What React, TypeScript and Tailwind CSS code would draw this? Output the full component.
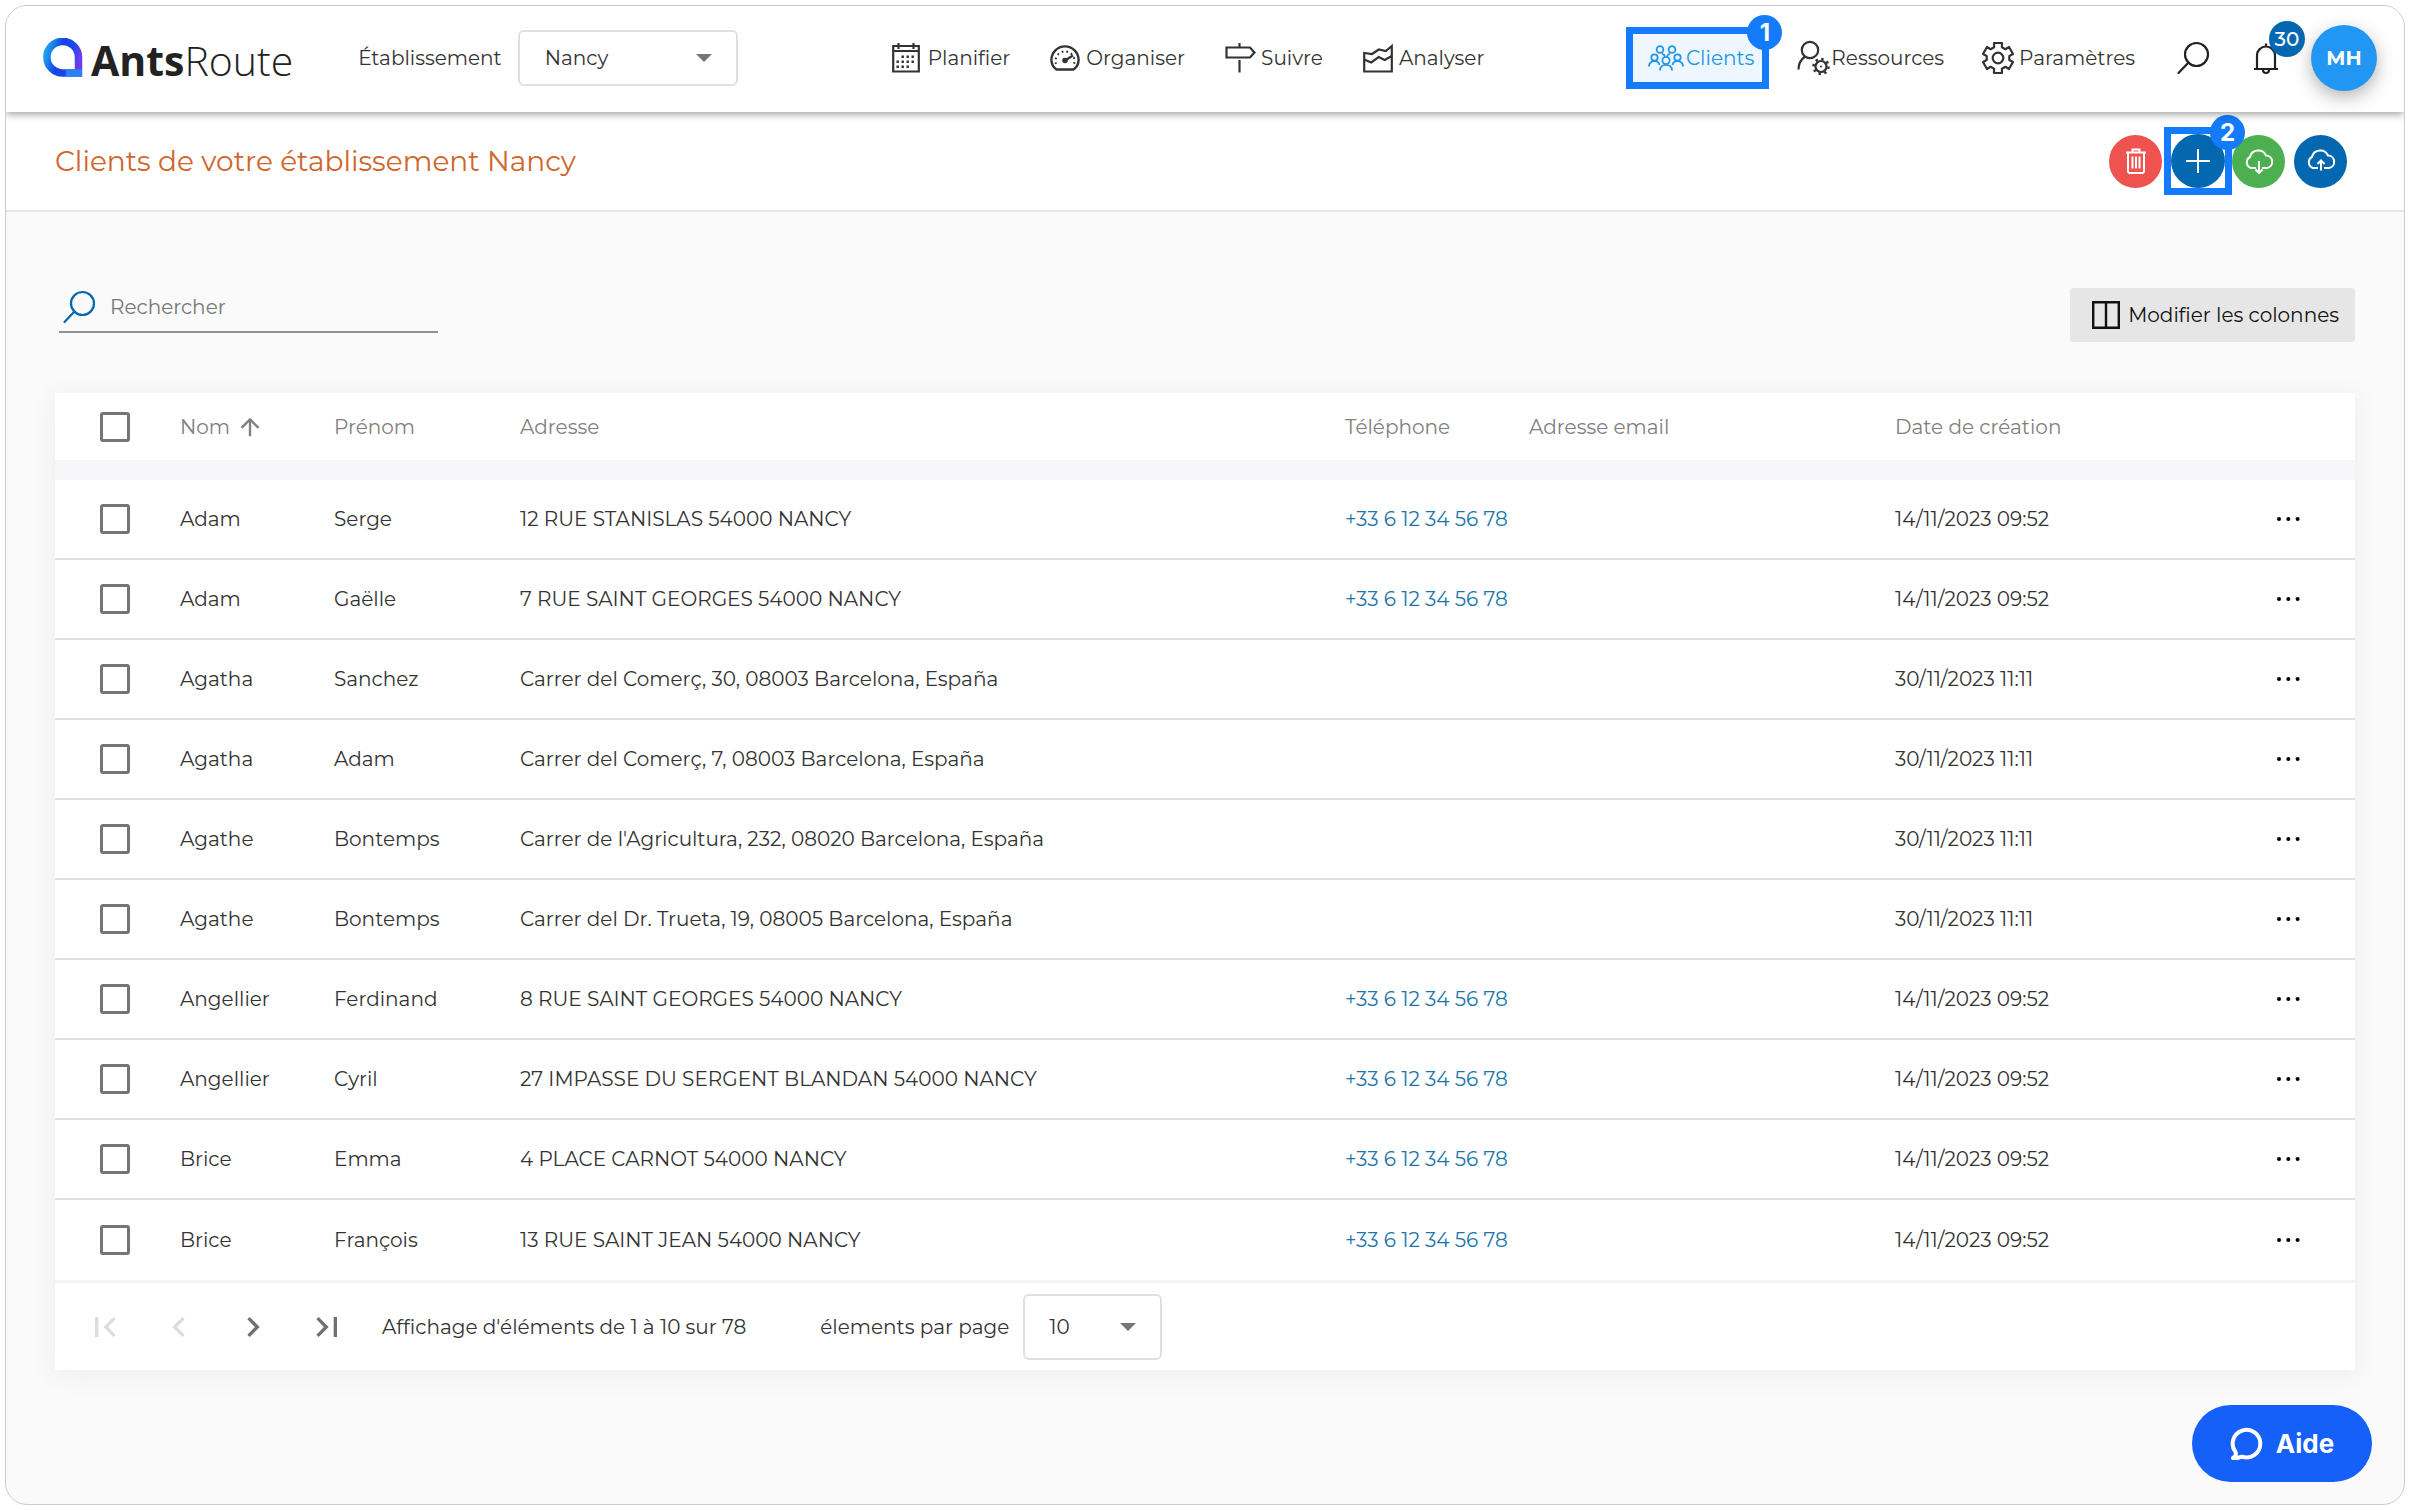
import React from 'react';
import {
  MdArrowUpward,
  MdChevronLeft,
  MdChevronRight,
  MdFirstPage,
  MdLastPage,
} from 'react-icons/md';

type Client = {
  nom: string;
  prenom: string;
  adresse: string;
  telephone?: string;
  creation: string;
};

const PHONE = '+33 6 12 34 56 78';

const clients: Client[] = [
  { nom: 'Adam', prenom: 'Serge', adresse: '12 RUE STANISLAS 54000 NANCY', telephone: PHONE, creation: '14/11/2023 09:52' },
  { nom: 'Adam', prenom: 'Gaëlle', adresse: '7 RUE SAINT GEORGES 54000 NANCY', telephone: PHONE, creation: '14/11/2023 09:52' },
  { nom: 'Agatha', prenom: 'Sanchez', adresse: 'Carrer del Comerç, 30, 08003 Barcelona, España', creation: '30/11/2023 11:11' },
  { nom: 'Agatha', prenom: 'Adam', adresse: 'Carrer del Comerç, 7, 08003 Barcelona, España', creation: '30/11/2023 11:11' },
  { nom: 'Agathe', prenom: 'Bontemps', adresse: "Carrer de l'Agricultura, 232, 08020 Barcelona, España", creation: '30/11/2023 11:11' },
  { nom: 'Agathe', prenom: 'Bontemps', adresse: 'Carrer del Dr. Trueta, 19, 08005 Barcelona, España', creation: '30/11/2023 11:11' },
  { nom: 'Angellier', prenom: 'Ferdinand', adresse: '8 RUE SAINT GEORGES 54000 NANCY', telephone: PHONE, creation: '14/11/2023 09:52' },
  { nom: 'Angellier', prenom: 'Cyril', adresse: '27 IMPASSE DU SERGENT BLANDAN 54000 NANCY', telephone: PHONE, creation: '14/11/2023 09:52' },
  { nom: 'Brice', prenom: 'Emma', adresse: '4 PLACE CARNOT 54000 NANCY', telephone: PHONE, creation: '14/11/2023 09:52' },
  { nom: 'Brice', prenom: 'François', adresse: '13 RUE SAINT JEAN 54000 NANCY', telephone: PHONE, creation: '14/11/2023 09:52' },
];

const CalendarIcon = () => (
  <svg className="w-8 h-[30px]" viewBox="0 0 32 30" fill="none" stroke="currentColor" strokeWidth="2.2">
    <path d="M1.2 3h25.600v25.500H1.200zM1 8h26" />
    <path d="M6.500 0v6M21.500 0v6" />
    <path d="M9.500 13.700h13M4.500 18.700h18M4.500 23.700h13" strokeWidth="2.4" strokeDasharray="2.4 2.6" />
  </svg>
);

const GaugeIcon = () => (
  <svg className="w-8 h-[26px]" viewBox="0 0 32 26" fill="none" stroke="currentColor" strokeWidth="2.4">
    <path d="M6.500 24.500C3 22 1.400 18.500 1.400 15a13.600 13.600 0 0 1 27.200 0c0 3.500-1.600 7-5.100 9.500z" strokeLinejoin="round" />
    <path d="M6 19a9.500 9.500 0 1 1 18 0" strokeWidth="2" strokeDasharray="1.8 3" />
    <path d="m15 15.500 8-5" />
    <circle cx="15" cy="15.500" r="1.600" fill="currentColor" />
  </svg>
);

const SignIcon = () => (
  <svg className="w-8 h-[30px]" viewBox="0 0 32 30" fill="none" stroke="currentColor" strokeWidth="2.2">
    <path d="M1.500 4.500h23.500l4.500 5-4.500 5H1.500zM14.500 0v4M14.500 17v12.500" />
  </svg>
);

const ChartIcon = () => (
  <svg className="w-8 h-[30px]" viewBox="0 0 32 30" fill="none" stroke="currentColor" strokeWidth="2.2">
    <path d="M1.200 10v18.500h27.600V3l-6 5-7-1.500L9 11z" />
    <path d="m1.200 16.500 7 3 7.500-5.500 6 3 7-4" />
  </svg>
);

const PeopleIcon = () => (
  <svg className="w-9 h-[26px]" viewBox="0 0 36 26" fill="none" stroke="currentColor" strokeWidth="1.8">
    <circle cx="12" cy="4.500" r="3.400" />
    <circle cx="24" cy="4.500" r="3.400" />
    <circle cx="6.500" cy="12.500" r="3.200" />
    <circle cx="29.500" cy="12.500" r="3.200" />
    <circle cx="18" cy="15.500" r="3.600" />
    <path d="M1 21.500c0-6.500 9.500-7.500 10.500-1.500M24.500 20c1-6 10.500-5 10.500 1.500M12 25.500c0-7.500 12-7.500 12 0" />
    <path d="M14 8.500c1.500.5 2.500 1.500 3 3M22 8.500c-1.500.5-2.500 1.500-3 3" />
  </svg>
);

const UserGearIcon = () => (
  <svg className="w-[34px] h-9" viewBox="0 0 34 36" fill="none" stroke="currentColor" strokeWidth="2.2">
    <circle cx="13" cy="10" r="8.200" />
    <path d="M1.500 29.500c0-6.500 2.500-10 6.500-13" />
    <circle cx="24" cy="26.500" r="5.500" />
    <circle cx="24" cy="26.500" r="7.500" strokeWidth="2.5" strokeDasharray="2.4 3.49" />
    <circle cx="24" cy="26.500" r="0.800" fill="currentColor" strokeWidth="0.5" />
  </svg>
);

// six flat teeth, one pointing straight up
const gearPoints = Array.from({ length: 6 }, (_, i) => {
  const corners = [[-20, 11.5], [-15, 15.5], [15, 15.5], [20, 11.5]];
  return corners.map(([deg, r]) => {
    const a = ((i * 60 - 90 + deg) * Math.PI) / 180;
    return `${(17 + r * Math.cos(a)).toFixed(1)},${(17 + r * Math.sin(a)).toFixed(1)}`;
  }).join(' ');
}).join(' ');

const GearIcon = () => (
  <svg className="size-[34px]" viewBox="0 0 34 34" fill="none" stroke="currentColor" strokeWidth="2.2" strokeLinejoin="round">
    <polygon points={gearPoints} />
    <circle cx="17" cy="17" r="5.300" />
  </svg>
);

const SearchIcon = () => (
  <svg className="size-[34px] shrink-0" viewBox="0 0 34 34" fill="none" stroke="currentColor" strokeWidth="2.2" strokeLinecap="round">
    <circle cx="20.500" cy="13.500" r="11.500" />
    <path d="M12.500 21.500 2.500 32" />
  </svg>
);

const BellIcon = () => (
  <svg className="w-[26px] h-[34px]" viewBox="0 0 26 34" fill="none" stroke="currentColor" strokeWidth="2.2">
    <path d="M1 28h24M4 28V14.500a9 9 0 0 1 18 0V28M13 2.500v3" />
    <path d="M10 29a3 3 0 0 0 6 0" />
  </svg>
);

const TrashIcon = () => (
  <svg className="w-[22px] h-[26px]" viewBox="0 0 22 26" fill="none" stroke="currentColor" strokeWidth="2">
    <path d="M1 4.500h20M7.500 4V1.500h7V4M3 5v18a2 2 0 0 0 2 2h12a2 2 0 0 0 2-2V5M7.500 8.500v12M11 8.500v12M14.500 8.500v12" />
  </svg>
);

const PlusIcon = () => (
  <svg className="size-6" viewBox="0 0 24 24" stroke="currentColor" strokeWidth="2">
    <path d="M12 0v24M0 12h24" />
  </svg>
);

const CloudIcon = ({ up }: { up?: boolean }) => (
  <svg className="w-[30px] h-[26px]" viewBox="0 0 30 26" fill="none" stroke="currentColor" strokeWidth="2">
    <path d="M12 20H7A6 6 0 0 1 6 9a8.500 8.500 0 0 1 16-1.500A6.300 6.300 0 0 1 23 20h-5" />
    {up ? <path d="M15 22.500V13M11.500 16 15 12.500l3.500 3.500" /> : <path d="M15 13v12M11.500 21.500 15 25l3.500-3.500" />}
  </svg>
);

const Logo = () => (
  <a href="#accueil" aria-label="AntsRoute" className="flex items-center gap-2 text-[#222]">
    <svg className="size-10" viewBox="0 0 40 40" fill="none">
      <defs>
        <linearGradient id="logo" x1="0" y1="0.300" x2="1" y2="0.600">
          <stop offset="0" stopColor="#1d9bf0" />
          <stop offset="0.400" stopColor="#1244e0" />
          <stop offset="0.750" stopColor="#1c48e8" />
          <stop offset="1" stopColor="#6a3df0" />
        </linearGradient>
      </defs>
      <path d="M35.500 35V19A15.800 15.800 0 1 0 20 35z" stroke="url(#logo)" strokeWidth="7.5" />
      <path d="M23 35h16" stroke="#2b80f5" strokeWidth="7.5" />
    </svg>
    <span className="text-[41px] leading-[40px] font-['Open_Sans'] pt-1">
      <b>Ants</b>
      <span className="font-light">Route</span>
    </span>
  </a>
);

const navLeft = [
  { label: 'Planifier', icon: <CalendarIcon /> },
  { label: 'Organiser', icon: <GaugeIcon /> },
  { label: 'Suivre', icon: <SignIcon /> },
  { label: 'Analyser', icon: <ChartIcon /> },
];

const StepBadge = ({ children }: { children: React.ReactNode }) => (
  <span className="absolute -top-[19px] -right-5 size-[35px] rounded-full bg-[#147cfc] flex items-center justify-center font-['Inter'] text-[24px] font-bold text-white">
    {children}
  </span>
);

const Caret = () => (
  <svg className="absolute right-[26px] top-1/2 -translate-y-1/2 w-4 h-2 pointer-events-none" viewBox="0 0 16 8" fill="#757575">
    <path d="M0 0h16L8 8z" />
  </svg>
);

const Check = ({ label }: { label: string }) => (
  <input
    type="checkbox"
    aria-label={label}
    className="appearance-none block size-[30px] ml-[45px] border-3 border-[#757575] rounded-[3px] checked:bg-[#0468b1]"
  />
);

const App = () => {
  return (
    <div className="min-h-screen flex flex-col bg-white p-[5px] font-['Montserrat','Inter',sans-serif] text-[20px] leading-[28px] text-[#333]">
      <div className="flex-1 flex flex-col border border-[#ccc] rounded-[22px] overflow-hidden bg-[#fafafa]">
        <header className="relative z-10 h-[106px] bg-white shadow-[0_2px_8px_rgba(0,0,0,0.4)] flex items-center pl-[37px] pr-[27px] pb-[2px]">
          <Logo />
          <label htmlFor="etab" className="ml-[65px]">Établissement</label>
          <div className="relative ml-4">
            <select id="etab" className="appearance-none w-[220px] h-[56px] pl-[25px] border-2 border-[#e0e0e0] rounded-md bg-white">
              <option>Nancy</option>
            </select>
            <Caret />
          </div>

          <nav className="flex-1 flex items-center ml-[154px]">
            <div className="flex items-center gap-10">
              {navLeft.map((item) => (
                <a key={item.label} href="#nav" className="flex items-center gap-1">
                  {item.icon}
                  {item.label}
                </a>
              ))}
            </div>
            <div className="ml-auto flex items-center">
              <a href="#clients" className="relative flex items-center gap-[2px] h-[62px] pl-[15px] pr-2 border-[7px] border-[#147cfc] bg-[#eef7ff] text-[#2196e8]">
                <PeopleIcon />
                Clients
                <StepBadge>1</StepBadge>
              </a>
              <a href="#ressources" className="flex items-center ml-[28px]">
                <UserGearIcon />
                Ressources
              </a>
              <a href="#parametres" className="flex items-center gap-1 ml-[37px]">
                <GearIcon />
                Paramètres
              </a>
            </div>
          </nav>

          <button aria-label="Recherche" className="ml-[41px] text-[#222]"><SearchIcon /></button>
          <button aria-label="Notifications" className="relative ml-[43px] text-[#222]">
            <BellIcon />
            <span className="absolute -top-5 -right-[26px] size-9 rounded-full bg-[#0468b1] flex items-center justify-center text-[20px] font-medium text-white">
              30
            </span>
          </button>
          <button className="ml-[32px] size-[66px] rounded-full bg-[#2196f3] text-white font-bold shadow-[0_6px_18px_rgba(0,0,0,0.3)]">MH</button>
        </header>

        <div className="h-[100px] bg-white border-b-2 border-[#e4e4e4] flex items-center justify-between pl-[49px] pr-[57px]">
          <h1 className="text-[28px] leading-[36px] font-normal text-[#d0662b]">Clients de votre établissement Nancy</h1>
          <div className="flex items-center text-white">
            <button aria-label="Supprimer" className="size-[53px] rounded-full bg-[#ef5350] flex items-center justify-center"><TrashIcon /></button>
            <div className="relative ml-[2px] border-[7px] border-[#147cfc]">
              <button aria-label="Ajouter" className="size-[54px] rounded-full bg-[#0468b1] flex items-center justify-center"><PlusIcon /></button>
              <StepBadge>2</StepBadge>
            </div>
            <button aria-label="Exporter" className="size-[53px] rounded-full bg-[#4caf50] flex items-center justify-center"><CloudIcon /></button>
            <button aria-label="Importer" className="ml-[9px] size-[53px] rounded-full bg-[#0468b1] flex items-center justify-center"><CloudIcon up /></button>
          </div>
        </div>

        <main className="px-[49px] pt-[70px]">
          <div className="flex items-start justify-between">
            <label className="flex items-center gap-[14px] w-[379px] h-[51px] ml-1 pl-[3px] border-b-2 border-[#909090] text-[#0468b1]">
              <SearchIcon />
              <input type="text" aria-label="Rechercher" placeholder="Rechercher" className="w-full bg-transparent outline-none text-[#333] placeholder:text-[#777]" />
            </label>
            <button className="flex items-center gap-2 mt-[6px] h-[54px] pl-[22px] pr-4 rounded-[3px] bg-[#e6e6e6] text-[#111]">
              <svg className="size-7" viewBox="0 0 28 28" fill="none" stroke="currentColor" strokeWidth="2.4">
                <path d="M1.200 1.200h25.600v25.600H1.200zM14 1v26" />
              </svg>
              Modifier les colonnes
            </button>
          </div>

          <div className="mt-[51px] shadow-[0_4px_24px_rgba(80,80,110,0.08)]">
            <table className="w-full table-fixed border-separate border-spacing-0 bg-white text-left">
              <colgroup>
                <col className="w-[125px]" />
                <col className="w-[154px]" />
                <col className="w-[186px]" />
                <col />
                <col className="w-[184px]" />
                <col className="w-[366px]" />
                <col className="w-[370px]" />
                <col className="w-[90px]" />
              </colgroup>
              <thead className="text-[#808080] [&_th]:h-[87px] [&_th]:border-b-20 [&_th]:border-[#f6f6f9] [&_th]:font-normal">
                <tr>
                  <th><Check label="Tout sélectionner" /></th>
                  <th>
                    <span className="flex items-center gap-[6px]">
                      Nom <MdArrowUpward className="size-7" />
                    </span>
                  </th>
                  <th>Prénom</th>
                  <th>Adresse</th>
                  <th>Téléphone</th>
                  <th>Adresse email</th>
                  <th>Date de création</th>
                  <th />
                </tr>
              </thead>
              <tbody className="[&_td]:h-[80px] [&_td]:border-b-2 [&_td]:border-[#e0e0e0] [&_tr:last-child_td]:border-b-0">
                {clients.map((client, i) => (
                  <tr key={i}>
                    <td><Check label={`${client.nom} ${client.prenom}`} /></td>
                    <td>{client.nom}</td>
                    <td>{client.prenom}</td>
                    <td>{client.adresse}</td>
                    <td className="whitespace-nowrap">
                      {client.telephone && <a href="#tel" className="text-[#1a75ab]">{client.telephone}</a>}
                    </td>
                    <td />
                    <td>{client.creation}</td>
                    <td>
                      <button aria-label="Actions" className="block ml-[11px] text-black">
                        <svg className="w-6 h-2" viewBox="0 0 24 8" fill="currentColor">
                          <circle cx="3" cy="4" r="2" />
                          <circle cx="12.300" cy="4" r="2" />
                          <circle cx="21.600" cy="4" r="2" />
                        </svg>
                      </button>
                    </td>
                  </tr>
                ))}
              </tbody>
            </table>

            <div className="flex items-center h-[90px] bg-white pl-[30px] border-t-3 border-[#f3f3f6] text-[#707070]">
              <div className="flex items-center gap-[34px]">
                <button aria-label="Première page" disabled className="text-[#ddd]"><MdFirstPage className="size-10" /></button>
                <button aria-label="Page précédente" disabled className="text-[#ddd]"><MdChevronLeft className="size-10" /></button>
                <button aria-label="Page suivante"><MdChevronRight className="size-10" /></button>
                <button aria-label="Dernière page"><MdLastPage className="size-10" /></button>
              </div>
              <span className="ml-[35px] text-[#333]">Affichage d'éléments de 1 à 10 sur 78</span>
              <label htmlFor="size" className="ml-[74px] text-[#333]">élements par page</label>
              <div className="relative ml-[14px] text-[#333]">
                <select id="size" className="appearance-none w-[139px] h-[66px] pl-[24px] border-2 border-[#e0e0e0] rounded-md bg-white">
                  <option>10</option>
                </select>
                <Caret />
              </div>
            </div>
          </div>
        </main>
      </div>

      <button className="fixed right-[38px] bottom-[28px] flex items-center justify-center gap-3 w-[180px] h-[77px] rounded-full bg-[#1560f8] text-white text-[26px] font-bold font-['Inter']">
        <svg className="size-[34px]" viewBox="0 0 34 34" fill="none" stroke="currentColor" strokeWidth="4" strokeLinejoin="round">
          <path d="M3 31c2.500-1.500 3.500-4 2.500-6A13.800 13.800 0 1 1 12 29.700C9 30.500 6 31.500 3 31z" />
        </svg>
        Aide
      </button>
    </div>
  );
};

export default App;
